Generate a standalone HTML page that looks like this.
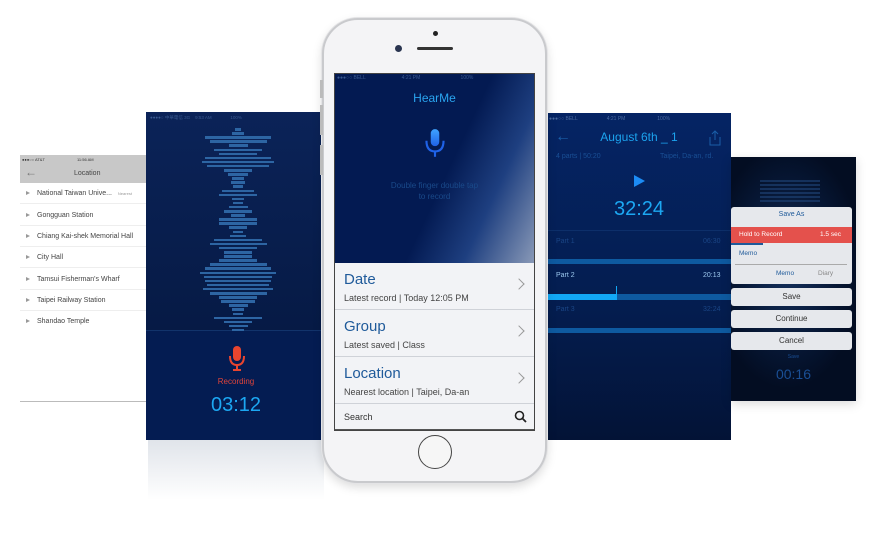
<!DOCTYPE html>
<html><head><meta charset="utf-8"><style>
*{margin:0;padding:0;box-sizing:border-box}
body{width:875px;height:545px;background:#fff;position:relative;overflow:hidden;font-family:"Liberation Sans",sans-serif}
.a{position:absolute}
.row{position:absolute;left:20px;width:126px;height:21px;border-bottom:1px solid #eee;font-size:7px;color:#444;line-height:21px;padding-left:17px}
.row:before{content:"";position:absolute;left:6px;top:8px;border-left:4px solid #999;border-top:2.5px solid transparent;border-bottom:2.5px solid transparent}
.wb{position:absolute;height:2.5px;background:#2d65a3}
.item{position:absolute;left:334px;width:201px;height:47px;border-bottom:1px solid #cfd2d8;background:#f2f3f6}
.item .t{position:absolute;left:10px;top:8px;font-size:15px;color:#1f5a9a}
.item .s{position:absolute;left:10px;top:30px;font-size:9px;color:#444}
.item .c{position:absolute;right:12px;top:17px;width:8px;height:8px;border-right:1px solid #999;border-top:1px solid #999;transform:rotate(45deg)}
.btn{position:absolute;left:731px;width:121px;height:18px;background:#e6e8ec;border-radius:3px;font-size:8px;color:#333;text-align:center;line-height:18px}
</style></head><body>

<!-- left location screen -->
<div class="a" style="left:20px;top:155px;width:126px;height:28px;background:#c8c8c8"></div>
<div class="a" style="left:22px;top:157px;font-size:4px;color:#333">●●●○○ AT&amp;T</div>
<div class="a" style="left:77px;top:157px;font-size:4px;color:#333">11:56 AM</div>
<div class="a" style="left:25px;top:166px;font-size:12px;color:#777;line-height:12px">←</div>
<div class="a" style="left:74px;top:170px;font-size:7px;color:#444">Location</div>
<div class="row" style="top:183px">National Taiwan Unive... <span style="font-size:4px;color:#999;margin-left:4px">Nearest</span></div>
<div class="row" style="top:205px">Gongguan Station</div>
<div class="row" style="top:226px">Chiang Kai-shek Memorial Hall</div>
<div class="row" style="top:247px">City Hall</div>
<div class="row" style="top:269px">Tamsui Fisherman's Wharf</div>
<div class="row" style="top:290px">Taipei Railway Station</div>
<div class="row" style="top:311px;border:none">Shandao Temple</div>
<div class="a" style="left:20px;top:401px;width:126px;height:1px;background:#bbb"></div>

<!-- recording screen -->
<div class="a" style="left:146px;top:112px;width:180px;height:218px;background:linear-gradient(#0b2358,#061a45)"></div>
<div class="a" style="left:146px;top:330px;width:180px;height:110px;background:#041c52;border-top:1px solid #12336b"></div>
<div class="a" style="left:150px;top:115px;font-size:4.5px;color:#3a5a90">●●●●○ 中華電信 3G &nbsp;&nbsp; 9:53 AM &nbsp;&nbsp;&nbsp;&nbsp;&nbsp;&nbsp;&nbsp;&nbsp;&nbsp;&nbsp;&nbsp;&nbsp;&nbsp; 100%</div>
<div id="wave"></div>
<div class="a" style="left:148px;top:440px;width:176px;height:60px;background:linear-gradient(#e0e4ea,#fff)"></div>
<svg class="a" style="left:227px;top:344px" width="20" height="30" viewBox="0 0 20 30"><rect x="6" y="2" width="8" height="15" rx="4" fill="#e8452f"/><path d="M3 12 Q3 21 10 21 Q17 21 17 12" stroke="#e8452f" stroke-width="2" fill="none"/><path d="M10 21V26M6 26H14" stroke="#e8452f" stroke-width="2"/></svg>
<div class="a" style="left:146px;top:377px;width:180px;text-align:center;font-size:8px;color:#e0443a">Recording</div>
<div class="a" style="left:146px;top:394px;width:180px;text-align:center;font-size:20px;color:#1ca7f2">03:12</div>

<!-- right detail screen -->
<div class="a" style="left:547px;top:113px;width:184px;height:327px;background:linear-gradient(#052464,#041d4f 60%,#031336)"></div>
<div class="a" style="left:549px;top:116px;font-size:5px;color:#4a6aa0;width:180px">●●●○○ BELL &nbsp;&nbsp;&nbsp;&nbsp;&nbsp;&nbsp;&nbsp;&nbsp;&nbsp;&nbsp;&nbsp;&nbsp;&nbsp;&nbsp;&nbsp;&nbsp;&nbsp;&nbsp;&nbsp; 4:21 PM &nbsp;&nbsp;&nbsp;&nbsp;&nbsp;&nbsp;&nbsp;&nbsp;&nbsp;&nbsp;&nbsp;&nbsp;&nbsp;&nbsp;&nbsp;&nbsp;&nbsp;&nbsp;&nbsp;&nbsp;&nbsp; 100%</div>
<div class="a" style="left:555px;top:128px;font-size:16px;color:#1a5ea8">←</div>
<div class="a" style="left:547px;top:130px;width:184px;text-align:center;font-size:12px;color:#1ca3ee">August 6th _ 1</div>
<svg class="a" style="left:707px;top:130px" width="16" height="16"><path d="M3 7V15H13V7M8 1V10M5 4L8 1L11 4" stroke="#1a5ea8" fill="none"/></svg>
<div class="a" style="left:556px;top:153px;font-size:7px;color:#1a4f95">4 parts | 50:20</div>
<div class="a" style="left:660px;top:153px;font-size:7px;color:#1a4f95">Taipei, Da-an, rd.</div>
<div class="a" style="left:634px;top:175px;border-left:11px solid #1c8cf5;border-top:6px solid transparent;border-bottom:6px solid transparent"></div>
<div class="a" style="left:547px;top:198px;width:184px;text-align:center;font-size:20px;color:#1ca7f2">32:24</div>
<div class="a" style="left:547px;top:230px;width:184px;height:1px;background:#0d2f6a"></div>
<div class="a" style="left:556px;top:238px;font-size:7px;color:#1a4585">Part 1</div><div class="a" style="left:703px;top:238px;font-size:7px;color:#1a4585">06:30</div>
<div class="a" style="left:547px;top:259px;width:184px;height:5px;background:#0e5aa0"></div>
<div class="a" style="left:556px;top:272px;font-size:7px;color:#9cc8ee">Part 2</div><div class="a" style="left:703px;top:272px;font-size:7px;color:#9cc8ee">20:13</div>
<div class="a" style="left:547px;top:294px;width:184px;height:6px;background:#0e5aa0"></div>
<div class="a" style="left:547px;top:294px;width:70px;height:6px;background:#12a8f5"></div>
<div class="a" style="left:616px;top:286px;width:1px;height:8px;background:#12a8f5"></div>
<div class="a" style="left:556px;top:306px;font-size:7px;color:#1a4585">Part 3</div><div class="a" style="left:703px;top:306px;font-size:7px;color:#1a4585">32:24</div>
<div class="a" style="left:547px;top:328px;width:184px;height:5px;background:#0e5aa0"></div>

<!-- far right save screen -->
<div class="a" style="left:731px;top:157px;width:125px;height:244px;background:radial-gradient(ellipse 60% 50% at 45% 45%,#15315e,#061633 70%,#030d22);box-shadow:0 3px 10px rgba(0,0,0,.15)"></div>
<div class="a" style="left:760px;top:180px;width:60px;height:22px;background:repeating-linear-gradient(#1f4478 0 2px,transparent 2px 4px);opacity:.6"></div>
<div class="a" style="left:731px;top:207px;width:121px;height:77px;background:#e6e8ec;border-radius:3px"></div>
<div class="a" style="left:731px;top:211px;width:121px;text-align:center;font-size:7px;color:#1f5a9a">Save As</div>
<div class="a" style="left:731px;top:227px;width:121px;height:16px;background:#e4514c"></div>
<div class="a" style="left:739px;top:231px;font-size:6.5px;color:#fff">Hold to Record</div>
<div class="a" style="left:820px;top:231px;font-size:6.5px;color:#fff">1.5 sec</div>
<div class="a" style="left:731px;top:243px;width:32px;height:2px;background:#1f5a9a"></div>
<div class="a" style="left:739px;top:250px;font-size:6.5px;color:#1f5a9a">Memo</div>
<div class="a" style="left:735px;top:264px;width:112px;height:1px;background:#aaa"></div>
<div class="a" style="left:776px;top:270px;font-size:6.5px;color:#1f5a9a">Memo</div>
<div class="a" style="left:818px;top:270px;font-size:6.5px;color:#888">Diary</div>
<div class="btn" style="top:288px">Save</div>
<div class="btn" style="top:310px">Continue</div>
<div class="btn" style="top:332px">Cancel</div>
<div class="a" style="left:731px;top:354px;width:125px;text-align:center;font-size:5px;color:#1a4f95">Save</div>
<div class="a" style="left:731px;top:366px;width:125px;text-align:center;font-size:14px;color:#1a4f95">00:16</div>

<!-- phone -->
<div class="a" style="left:322px;top:18px;width:225px;height:465px;border-radius:36px;background:#f4f4f6;border:2px solid #c9cacd;box-shadow:0 0 0 1px #e4e4e6,0 4px 10px rgba(0,0,0,.15)"></div>
<div class="a" style="left:320px;top:80px;width:3px;height:18px;background:#bbb"></div>
<div class="a" style="left:320px;top:105px;width:3px;height:30px;background:#bbb"></div>
<div class="a" style="left:320px;top:145px;width:3px;height:30px;background:#bbb"></div>
<div class="a" style="left:433px;top:31px;width:5px;height:5px;border-radius:50%;background:#222"></div>
<div class="a" style="left:395px;top:45px;width:7px;height:7px;border-radius:50%;background:#2a3550"></div>
<div class="a" style="left:417px;top:47px;width:36px;height:3px;border-radius:2px;background:#333"></div>
<div class="a" style="left:334px;top:73px;width:201px;height:190px;background:linear-gradient(115deg,#031a52 55%,#1e3f80 75%,#8a9ab8)"></div>
<div class="a" style="left:337px;top:75px;font-size:5px;color:#3a5a90;width:195px">●●●○○ BELL &nbsp;&nbsp;&nbsp;&nbsp;&nbsp;&nbsp;&nbsp;&nbsp;&nbsp;&nbsp;&nbsp;&nbsp;&nbsp;&nbsp;&nbsp;&nbsp;&nbsp;&nbsp;&nbsp;&nbsp;&nbsp;&nbsp;&nbsp;&nbsp; 4:21 PM &nbsp;&nbsp;&nbsp;&nbsp;&nbsp;&nbsp;&nbsp;&nbsp;&nbsp;&nbsp;&nbsp;&nbsp;&nbsp;&nbsp;&nbsp;&nbsp;&nbsp;&nbsp;&nbsp;&nbsp;&nbsp;&nbsp;&nbsp;&nbsp;&nbsp;&nbsp;&nbsp; 100%</div>
<div class="a" style="left:334px;top:91px;width:201px;text-align:center;font-size:12px;color:#2aa5f0">HearMe</div>
<svg class="a" style="left:424px;top:128px" width="22" height="32" viewBox="0 0 20 30"><defs><linearGradient id="g" x1="0" y1="0" x2="0" y2="1"><stop offset="0" stop-color="#3fa4ff"/><stop offset="1" stop-color="#1f62e8"/></linearGradient></defs><rect x="6" y="1" width="8" height="16" rx="4" fill="url(#g)"/><path d="M2 12 Q2 22 10 22 Q18 22 18 12" stroke="#1f62e8" stroke-width="2" fill="none"/><path d="M10 22V27" stroke="#1f62e8" stroke-width="2"/></svg>
<div class="a" style="left:334px;top:180px;width:201px;text-align:center;font-size:8px;line-height:11px;color:#1a4a8a">Double finger double tap<br>to record</div>
<div class="item" style="top:263px"><div class="t">Date</div><div class="s">Latest record | Today 12:05 PM</div><div class="c"></div></div>
<div class="item" style="top:310px"><div class="t">Group</div><div class="s">Latest saved | Class</div><div class="c"></div></div>
<div class="item" style="top:357px"><div class="t">Location</div><div class="s">Nearest location | Taipei, Da-an</div><div class="c"></div></div>
<div class="a" style="left:334px;top:404px;width:201px;height:26px;background:#f2f3f6;border-bottom:1px solid #555"></div>
<div class="a" style="left:344px;top:412px;font-size:9px;color:#333">Search</div>
<svg class="a" style="left:514px;top:410px" width="14" height="14"><circle cx="5.5" cy="5.5" r="4" stroke="#222" stroke-width="1.6" fill="none"/><path d="M8.5 8.5L12 12" stroke="#222" stroke-width="1.8"/></svg>
<div class="a" style="left:334px;top:73px;width:201px;height:358px;border:1px solid #444"></div>
<div class="a" style="left:418px;top:435px;width:34px;height:34px;border-radius:50%;border:1.5px solid #444;background:#f6f6f6"></div>

<script>
var w=document.getElementById('wave'),h='';
var ws=[6,12,70,60,20,50,40,70,75,66,30,22,12,14,10,34,40,12,10,20,30,14,40,40,18,10,16,50,60,40,30,30,40,60,70,80,72,70,66,74,60,40,36,20,12,10,50,30,20,12];
for(var i=0;i<ws.length;i++){var y=128+i*4.1,wd=ws[i]*0.95;h+='<div class="wb" style="left:'+(238-wd/2)+'px;top:'+y+'px;width:'+wd+'px"></div>';}
w.innerHTML=h;
</script>
</body></html>
